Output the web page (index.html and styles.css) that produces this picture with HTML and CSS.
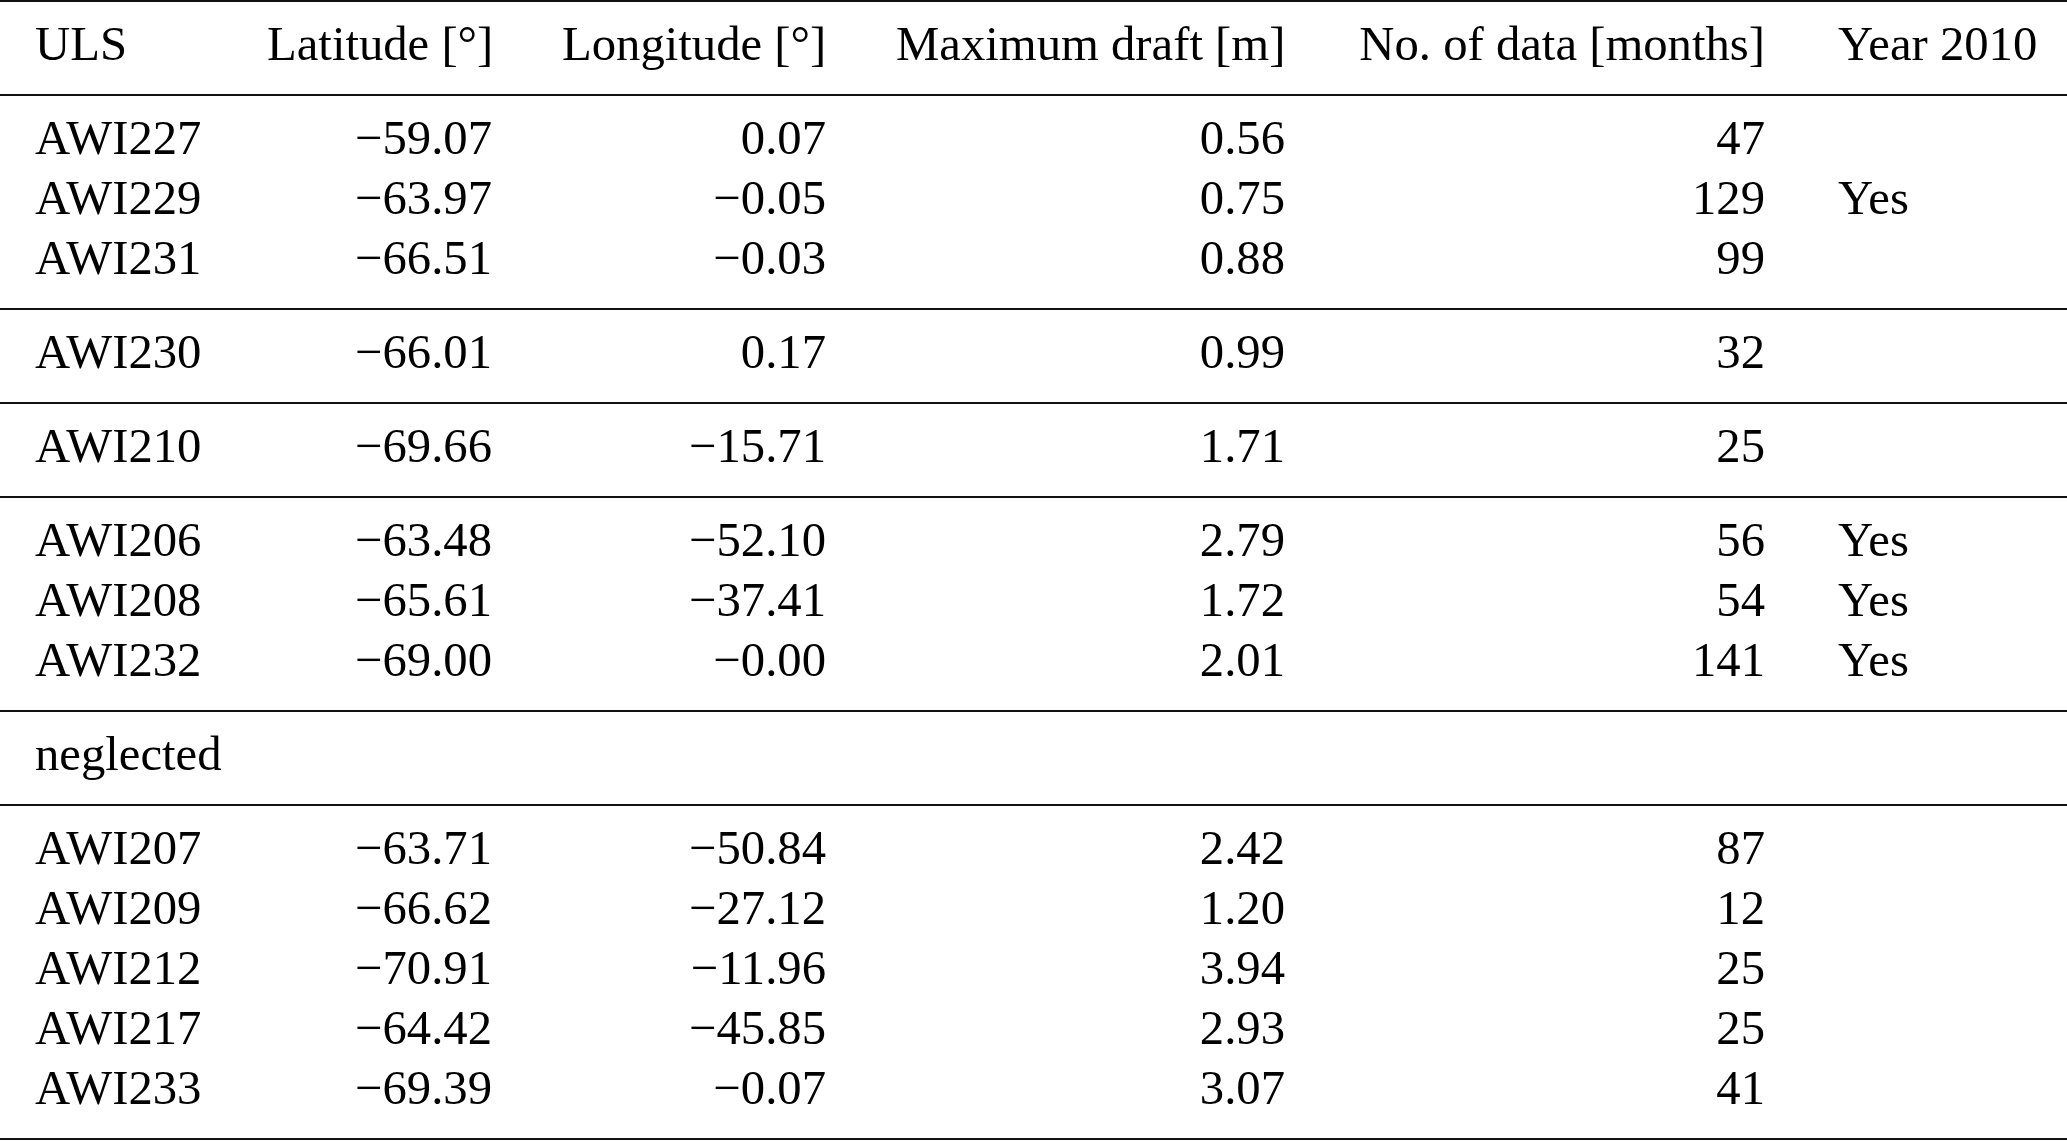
FILE: index.html
```html
<!DOCTYPE html>
<html lang="en">
<head>
<meta charset="utf-8">
<title>ULS table</title>
<link rel="stylesheet" href="styles.css">
</head>
<body>
<table class="uls-table">
  <colgroup>
    <col class="c-uls">
    <col class="c-lat">
    <col class="c-lon">
    <col class="c-draft">
    <col class="c-months">
    <col class="c-year">
  </colgroup>
  <thead>
    <tr class="first last">
      <th class="l">ULS</th>
      <th class="r">Latitude [°]</th>
      <th class="r">Longitude [°]</th>
      <th class="r">Maximum draft [m]</th>
      <th class="r">No. of data [months]</th>
      <th class="l yr">Year 2010</th>
    </tr>
  </thead>
  <tbody>
    <tr class="first">
      <td class="l">AWI227</td><td class="r">−59.07</td><td class="r">0.07</td><td class="r">0.56</td><td class="r">47</td><td class="l yr"></td>
    </tr>
    <tr>
      <td class="l">AWI229</td><td class="r">−63.97</td><td class="r">−0.05</td><td class="r">0.75</td><td class="r">129</td><td class="l yr">Yes</td>
    </tr>
    <tr class="last">
      <td class="l">AWI231</td><td class="r">−66.51</td><td class="r">−0.03</td><td class="r">0.88</td><td class="r">99</td><td class="l yr"></td>
    </tr>
  </tbody>
  <tbody>
    <tr class="first last">
      <td class="l">AWI230</td><td class="r">−66.01</td><td class="r">0.17</td><td class="r">0.99</td><td class="r">32</td><td class="l yr"></td>
    </tr>
  </tbody>
  <tbody>
    <tr class="first last">
      <td class="l">AWI210</td><td class="r">−69.66</td><td class="r">−15.71</td><td class="r">1.71</td><td class="r">25</td><td class="l yr"></td>
    </tr>
  </tbody>
  <tbody>
    <tr class="first">
      <td class="l">AWI206</td><td class="r">−63.48</td><td class="r">−52.10</td><td class="r">2.79</td><td class="r">56</td><td class="l yr">Yes</td>
    </tr>
    <tr>
      <td class="l">AWI208</td><td class="r">−65.61</td><td class="r">−37.41</td><td class="r">1.72</td><td class="r">54</td><td class="l yr">Yes</td>
    </tr>
    <tr class="last">
      <td class="l">AWI232</td><td class="r">−69.00</td><td class="r">−0.00</td><td class="r">2.01</td><td class="r">141</td><td class="l yr">Yes</td>
    </tr>
  </tbody>
  <tbody>
    <tr class="first last">
      <td class="l" colspan="6">neglected</td>
    </tr>
  </tbody>
  <tbody class="final">
    <tr class="first">
      <td class="l">AWI207</td><td class="r">−63.71</td><td class="r">−50.84</td><td class="r">2.42</td><td class="r">87</td><td class="l yr"></td>
    </tr>
    <tr>
      <td class="l">AWI209</td><td class="r">−66.62</td><td class="r">−27.12</td><td class="r">1.20</td><td class="r">12</td><td class="l yr"></td>
    </tr>
    <tr>
      <td class="l">AWI212</td><td class="r">−70.91</td><td class="r">−11.96</td><td class="r">3.94</td><td class="r">25</td><td class="l yr"></td>
    </tr>
    <tr>
      <td class="l">AWI217</td><td class="r">−64.42</td><td class="r">−45.85</td><td class="r">2.93</td><td class="r">25</td><td class="l yr"></td>
    </tr>
    <tr class="last">
      <td class="l">AWI233</td><td class="r">−69.39</td><td class="r">−0.07</td><td class="r">3.07</td><td class="r">41</td><td class="l yr"></td>
    </tr>
  </tbody>
</table>
</body>
</html>
```

FILE: styles.css
```css
html, body {
  margin: 0;
  padding: 0;
  background: #ffffff;
}

body {
  width: 2067px;
  height: 1141px;
  overflow: hidden;
  font-family: "Liberation Serif", "Times New Roman", serif;
  color: #000000;
}

.uls-table {
  width: 2067px;
  table-layout: fixed;
  border-collapse: separate;
  border-spacing: 0;
  font-size: 48.7px;
  line-height: 60px;
}

.c-uls { width: 232px; }
.c-lat { width: 295px; }
.c-lon { width: 334px; }
.c-draft { width: 459px; }
.c-months { width: 480px; }
.c-year { width: 267px; }

.uls-table th,
.uls-table td {
  font-weight: normal;
  padding: 0 35px;
  white-space: nowrap;
  vertical-align: baseline;
}

.uls-table .l { text-align: left; }
.uls-table .r { text-align: right; }
.uls-table .yr { padding-left: 38px; }

.uls-table tr.first > th,
.uls-table tr.first > td {
  border-top: 2px solid #111111;
  padding-top: 12px;
}

.uls-table tr.last > th,
.uls-table tr.last > td {
  padding-bottom: 20px;
}

.uls-table tbody.final tr.last > td {
  border-bottom: 2px solid #111111;
}
```
